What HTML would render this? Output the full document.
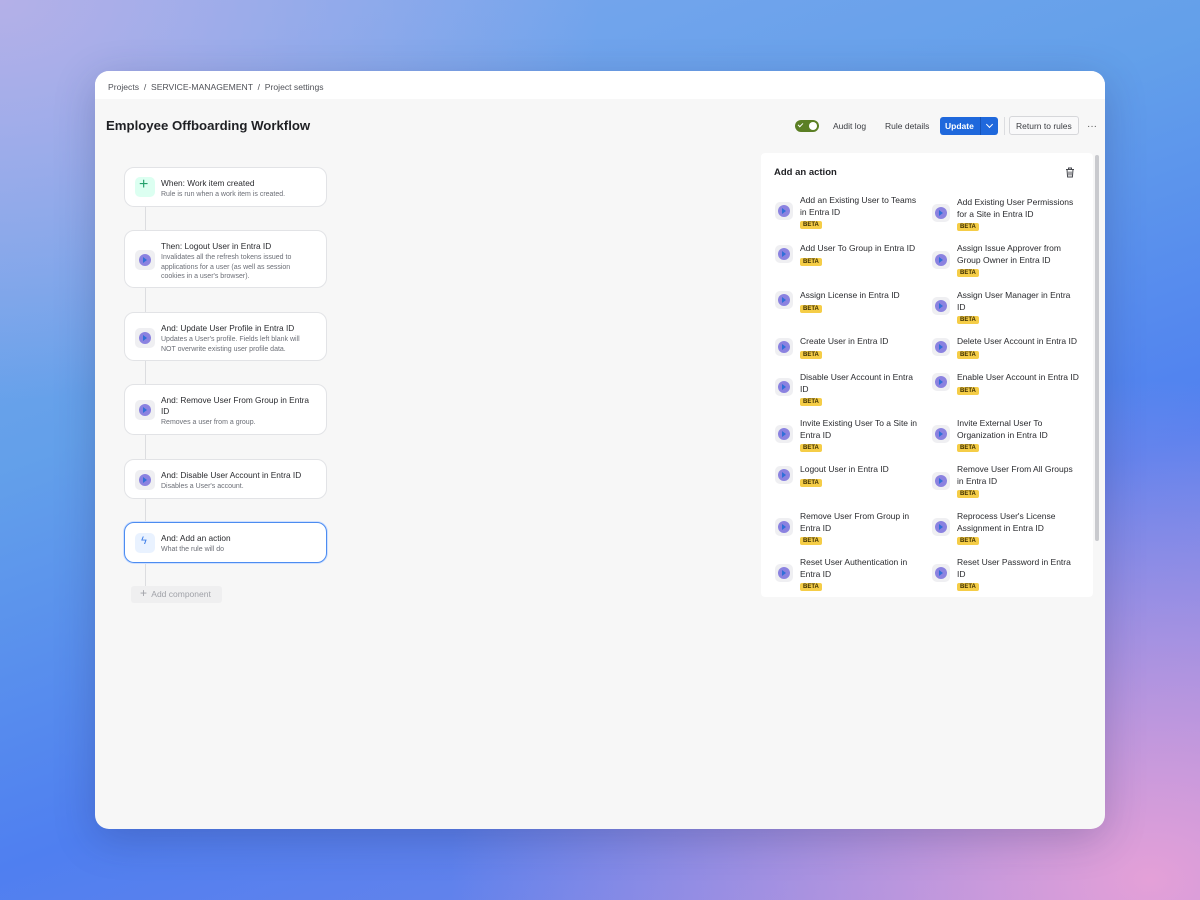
<!DOCTYPE html>
<html><head><meta charset="utf-8"><style>
*{margin:0;padding:0;box-sizing:border-box}
body{width:1200px;height:900px;overflow:hidden;font-family:"Liberation Sans",sans-serif;color:#292a2e;position:relative;
background:radial-gradient(ellipse 700px 500px at 1150px 880px,#e4a0d8 0%,rgba(228,160,216,0) 100%),
radial-gradient(ellipse 600px 400px at 0px 0px,#b4b0e8 0%,rgba(180,176,232,0) 100%),
linear-gradient(160deg,#7fa8ee 0%,#63a0ea 35%,#4f7ff0 65%,#7a86e6 100%);}
.win{position:absolute;left:95px;top:71px;width:1010px;height:758px;border-radius:14px;background:#f7f7f7;overflow:hidden;box-shadow:0 10px 40px rgba(40,40,90,.25)}
.hdr{position:absolute;left:0;top:0;width:100%;height:28px;background:#fff;font-size:8.6px;color:#505258;padding:11px 0 0 13px}
.a{position:absolute}
.title{left:11px;top:47px;font-size:13.2px;font-weight:bold;color:#1f2024}
.card{position:absolute;left:29px;width:203px;background:#fff;border:1px solid #e2e3e6;border-radius:10px}
.card .ic{position:absolute;left:10px;width:20px;height:20px;border-radius:5px;background:#efeff2}
.dot{position:absolute;left:4px;top:4px;width:12px;height:12px;border-radius:50%;background:#8b82e0}
.dot:after{content:"";position:absolute;left:4px;top:3px;border-left:4px solid #2f6fd8;border-top:3px solid transparent;border-bottom:3px solid transparent}
.card .t{position:absolute;left:36px;font-size:8.3px;color:#2a2b2f;line-height:11px;width:150px}
.card .d{font-size:7px;color:#6b6e76;line-height:9.5px;margin-top:1px;width:146px}
.vline{position:absolute;left:50px;width:1px;background:#dcdde0}
.panel{position:absolute;left:666px;top:82px;width:332px;height:444px;background:#fff;border-radius:4px}
.it{position:absolute;font-size:8.5px;line-height:11.5px;color:#2a2b2f;width:122px}
.beta{display:inline-block;background:#f5cd47;color:#3a2c00;font-size:6px;font-weight:bold;line-height:8px;padding:0 3px;border-radius:2px;margin-top:1px}
.pic{position:absolute;width:18px;height:18px;border-radius:5px;background:#efeff2}
.pic .dot{left:3px;top:3px}
.btn{position:absolute;font-size:8.5px;color:#3b3d42}
</style></head><body>
<div class="win">
<div class="hdr">Projects &nbsp;/&nbsp; SERVICE-MANAGEMENT &nbsp;/&nbsp; Project settings</div>
<div class="a title">Employee Offboarding Workflow</div>

<div class="a" style="left:700px;top:49px;width:24px;height:12px;border-radius:6px;background:#5b7f24"><div style="position:absolute;right:2px;top:2px;width:8px;height:8px;border-radius:50%;background:#fff"></div><div style="position:absolute;left:4px;top:2px;width:3px;height:5px;border-right:1.3px solid #fff;border-bottom:1.3px solid #fff;transform:rotate(45deg)"></div></div>
<div class="btn" style="left:738px;top:50px">Audit log</div>
<div class="btn" style="left:790px;top:50px">Rule details</div>
<div class="a" style="left:845px;top:46px;width:58px;height:18px;background:#1f68dc;border-radius:3px"></div>
<div class="a" style="left:850px;top:50px;font-size:8.5px;color:#fff;font-weight:bold">Update</div>
<div class="a" style="left:885px;top:46px;width:1px;height:18px;background:#1553b8"></div>
<div class="a" style="left:892px;top:51px;width:5px;height:5px;border-right:1.2px solid #fff;border-bottom:1.2px solid #fff;transform:rotate(45deg)"></div>
<div class="a" style="left:909px;top:46px;width:1px;height:18px;background:#dcdde0"></div>
<div class="a" style="left:914px;top:45px;width:70px;height:19px;border:1px solid #d6d7da;border-radius:3px;background:#f9f9fa"></div>
<div class="btn" style="left:921px;top:50px">Return to rules</div>
<div class="a" style="left:992px;top:50px;font-size:10px;color:#555">···</div>

<div class="vline" style="top:136px;height:380px"></div>
<div class="card" style="top:96px;height:40px"><div class="ic" style="top:9px;background:#dcfff1"><span style="position:absolute;left:4px;top:-1px;font-size:16px;color:#22a06b">+</span></div><div class="t" style="top:10px">When: Work item created<div class="d">Rule is run when a work item is created.</div></div></div>
<div class="card" style="top:159px;height:58px"><div class="ic" style="top:19px"><div class="dot"></div></div><div class="t" style="top:10px">Then: Logout User in Entra ID<div class="d">Invalidates all the refresh tokens issued to applications for a user (as well as session cookies in a user's browser).</div></div></div>
<div class="card" style="top:241px;height:49px"><div class="ic" style="top:15px"><div class="dot"></div></div><div class="t" style="top:10px">And: Update User Profile in Entra ID<div class="d">Updates a User's profile. Fields left blank will NOT overwrite existing user profile data.</div></div></div>
<div class="card" style="top:313px;height:51px"><div class="ic" style="top:15px"><div class="dot"></div></div><div class="t" style="top:10px">And: Remove User From Group in Entra ID<div class="d">Removes a user from a group.</div></div></div>
<div class="card" style="top:388px;height:40px"><div class="ic" style="top:10px"><div class="dot"></div></div><div class="t" style="top:10px">And: Disable User Account in Entra ID<div class="d">Disables a User's account.</div></div></div>
<div class="card" style="top:451px;height:41px;border:1.5px solid #4c8cf0;box-shadow:0 0 0 1px #cfe0ff"><div class="ic" style="top:10px;background:#e9f2ff"><span style="position:absolute;left:6px;top:2px;font-size:11px;color:#3c7de8">ϟ</span></div><div class="t" style="top:10px">And: Add an action<div class="d">What the rule will do</div></div></div>
<div class="a" style="left:36px;top:515px;width:91px;height:17px;background:#efeff0;border-radius:3px;font-size:8.5px;color:#a0a2a8;padding:3px 0 0 9px"><span style="font-size:12px;line-height:8px">+</span>&nbsp; Add component</div>

<div class="panel">
<div class="a" style="left:13px;top:14px;font-size:9.5px;font-weight:bold;color:#1f2024">Add an action</div>
<svg class="a" style="left:304px;top:14px" width="10" height="11" viewBox="0 0 10 11"><path d="M1 2.5h8M3.5 2.5V1h3v1.5M2 2.5l.6 7.5h4.8L8 2.5M4 4.5v4M6 4.5v4" stroke="#44464c" stroke-width="1" fill="none"/></svg>
</div>
<div class="a" style="left:1000px;top:84px;width:4px;height:386px;border-radius:2px;background:#c9cace"></div>
</div>

<div id="items"></div>
<script>
var L=[["Add an Existing User to Teams in Entra ID",195,211],["Add User To Group in Entra ID",243,254],["Assign License in Entra ID",290,300],["Create User in Entra ID",336,347],["Disable User Account in Entra ID",372,387],["Invite Existing User To a Site in Entra ID",418,434],["Logout User in Entra ID",464,475],["Remove User From Group in Entra ID",511,527],["Reset User Authentication in Entra ID",557,573]];
var R=[["Add Existing User Permissions for a Site in Entra ID",197,213],["Assign Issue Approver from Group Owner in Entra ID",243,260],["Assign User Manager in Entra ID",290,306],["Delete User Account in Entra ID",336,347],["Enable User Account in Entra ID",372,382],["Invite External User To Organization in Entra ID",418,434],["Remove User From All Groups in Entra ID",464,481],["Reprocess User's License Assignment in Entra ID",511,527],["Reset User Password in Entra ID",557,573]];
var h="";
function add(a,x,ix){a.forEach(function(r){h+='<div class="pic" style="left:'+(ix-9)+'px;top:'+(r[2]-9)+'px"><div class="dot"></div></div><div class="it" style="left:'+x+'px;top:'+r[1]+'px">'+r[0]+'<br><span class="beta">BETA</span></div>';});}
add(L,800,784);add(R,957,941);
document.getElementById("items").innerHTML=h;
</script>
</body></html>
